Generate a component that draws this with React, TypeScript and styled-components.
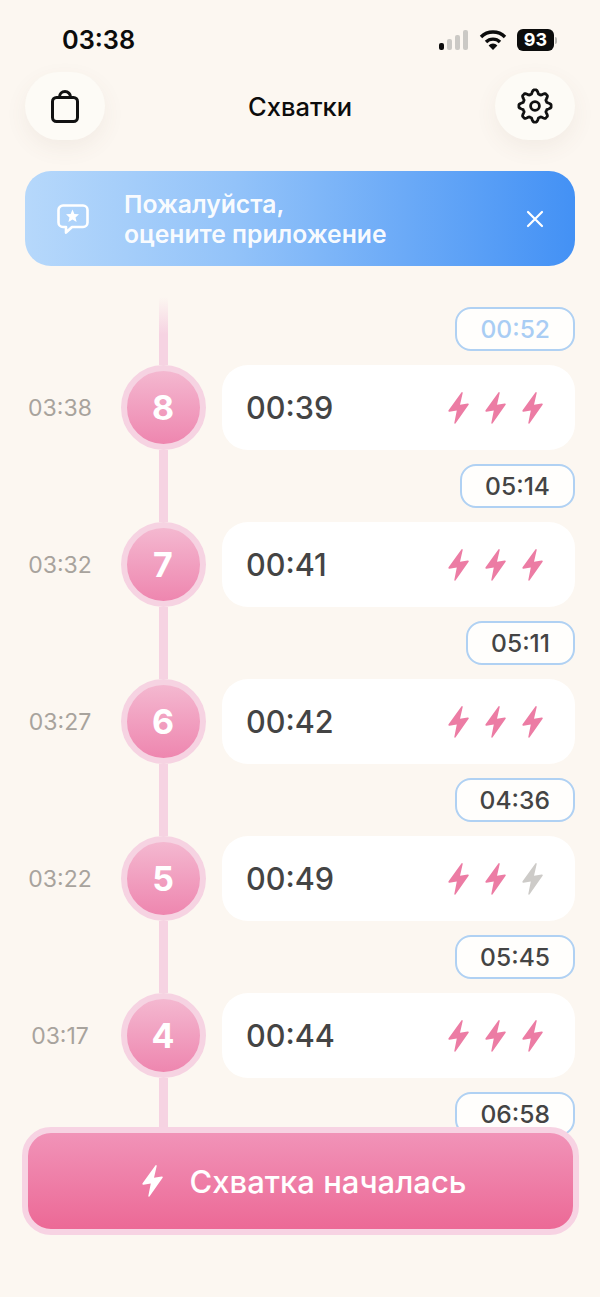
import React from "react";
import styled, { createGlobalStyle } from "styled-components";

const GlobalStyle = createGlobalStyle`
  html, body {
    margin: 0;
    padding: 0;
    background: #fcf7f1;
    font-family: Inter, "Noto Sans", sans-serif;
  }
`;

const Page = styled.div`
  position: relative;
  width: 600px;
  height: 1297px;
  overflow: hidden;
  display: flex;
  flex-direction: column;
  background: #fcf7f1;
`;

const StatusBar = styled.div`
  height: 72px;
  flex: none;
  display: flex;
  align-items: flex-start;
  justify-content: space-between;
  padding: 0 43px 0 62px;
  box-sizing: border-box;
`;

const Clock = styled.div`
  font-size: 25.3px;
  font-weight: 600;
  line-height: 34px;
  margin-top: 23px;
  color: #0c0c0c;
`;

const StatusIcons = styled.div`
  display: flex;
  align-items: center;
  margin-top: 28px;
  height: 24px;
`;

const Signal = styled.div`
  display: flex;
  align-items: flex-end;
  gap: 2.5px;
  height: 20px;
  margin-right: 11px;
`;

const SignalBar = styled.span<{ $h: number; $on?: boolean }>`
  width: 5.5px;
  height: ${(p) => p.$h}px;
  border-radius: 2px;
  background: ${(p) => (p.$on ? "#0c0c0c" : "#cbc9c5")};
`;

const Battery = styled.div`
  display: flex;
  align-items: center;
  margin-left: 10px;
`;

const BatteryBody = styled.div`
  width: 37px;
  height: 22px;
  border-radius: 6px;
  background: #0c0c0c;
  color: #fff;
  font-size: 18px;
  font-weight: 700;
  line-height: 22px;
  text-align: center;
`;

const BatteryTip = styled.span`
  width: 2px;
  height: 7px;
  margin-left: 1px;
  border-radius: 0 2px 2px 0;
  background: #b9b7b3;
`;

const Header = styled.div`
  flex: none;
  height: 68px;
  padding: 0 25px;
  display: flex;
  align-items: center;
  justify-content: space-between;
`;

const RoundButton = styled.button`
  width: 80px;
  height: 68px;
  padding: 0;
  border: 0;
  border-radius: 34px;
  background: #fdfbf6;
  box-shadow: 0 8px 22px rgba(110, 90, 70, 0.07);
  display: flex;
  align-items: center;
  justify-content: center;
  color: #111;
`;

const Title = styled.div`
  font-size: 25.5px;
  font-weight: 500;
  color: #0c0c0c;
`;

const Banner = styled.div`
  flex: none;
  height: 95px;
  margin: 31px 25px 0;
  border-radius: 26px;
  background: linear-gradient(90deg, #b6d8fb 0%, #93c3f9 38%, #4391f5 100%);
  display: flex;
  align-items: center;
  padding: 0 31px 0 32px;
  color: #fff;
`;

const BannerText = styled.div`
  flex: 1;
  margin-left: 35px;
  font-size: 24.7px;
  font-weight: 600;
  line-height: 30px;
  color: rgba(255, 255, 255, 0.96);
`;

const List = styled.div`
  flex: 1;
  min-height: 0;
  overflow: hidden;
  margin-top: 31px;
  padding: 0 25px;
`;

const Columns = styled.div<{ $h: number }>`
  display: grid;
  grid-template-columns: 95px 86px 1fr;
  height: ${(p) => p.$h}px;
`;

const Rail = styled.div<{ $fade?: boolean }>`
  grid-column: 2;
  justify-self: center;
  width: 9px;
  background: ${(p) =>
    p.$fade
      ? "linear-gradient(180deg, rgba(246,211,226,0) 0%, #f6d3e2 55%)"
      : "#f6d3e2"};
`;

const Pill = styled.div<{ $fresh?: boolean }>`
  grid-column: 3;
  justify-self: end;
  align-self: end;
  margin-bottom: 14px;
  height: 44px;
  box-sizing: border-box;
  padding: 0 23px;
  border: 2px solid #b0d1f3;
  border-radius: 16px;
  background: #fffefc;
  color: ${(p) => (p.$fresh ? "#a9cdf4" : "#444444")};
  font-size: 24.6px;
  font-weight: 500;
  line-height: 41px;
`;

const Time = styled.div`
  width: 70px;
  align-self: center;
  text-align: center;
  font-size: 23px;
  color: #a8a39d;
`;

const Marker = styled.div`
  justify-self: center;
  width: 85px;
  height: 85px;
  box-sizing: border-box;
  border: 6px solid #f6d3e2;
  border-radius: 50%;
  background: linear-gradient(180deg, #f4b8d0 0%, #ee86af 100%);
  color: #fff;
  font-size: 34px;
  font-weight: 700;
  line-height: 73px;
  text-align: center;
`;

const Card = styled.div`
  margin-left: 16px;
  border-radius: 26px;
  background: #fff;
  display: flex;
  align-items: center;
  justify-content: space-between;
  padding: 0 32px 0 24px;
`;

const Duration = styled.div`
  font-size: 30.6px;
  font-weight: 500;
  color: #444444;
`;

const Bolts = styled.div`
  display: flex;
  gap: 16px;
`;

const FooterButton = styled.button`
  position: absolute;
  left: 22px;
  top: 1127px;
  width: 557px;
  height: 108px;
  box-sizing: border-box;
  border: 6.5px solid #f7d3e3;
  border-radius: 29px;
  background: linear-gradient(180deg, #f193b8 0%, #ec6996 100%);
  color: #fff;
  font-family: inherit;
  font-size: 31px;
  font-weight: 500;
  display: flex;
  align-items: center;
  justify-content: center;
  gap: 27px;
  padding: 0 0 0 7px;
`;

const Bolt = ({ color }: { color: string }) => (
  <svg width={21} height={34} viewBox="0 0 22 34" fill={color}>
    <path d="M14.2 0.6 L0.6 19.4 Q-0.2 20.9 1.6 20.8 L9.2 19.6 L6.6 32.8 Q6.8 34.2 8 33 L21.6 13.6 Q22.3 12.2 20.6 12.3 L12.6 13.6 L15.4 1.2 Q15.2 -0.4 14.2 0.6 Z" />
  </svg>
);

const BagIcon = () => (
  <svg width="28" height="33" viewBox="0 0 28 33" fill="none" stroke="#111" strokeWidth="3" strokeLinejoin="round">
    <rect x="1.5" y="7.5" width="25" height="24" rx="4" />
    <path d="M8.5 7.5 V7 A5.5 5.5 0 0 1 19.5 7 V7.5" />
  </svg>
);

// eight rounded teeth, sampled around the circle
const gearPath = Array.from({ length: 144 }, (_, i) => {
  const a = (i / 144) * Math.PI * 2;
  const wave = Math.max(-1, Math.min(1, 1.5 * Math.cos(8 * a)));
  const r = 14.2 + 1.9 * wave;
  const x = 18 + r * Math.sin(a);
  const y = 18 - r * Math.cos(a);
  return `${i === 0 ? "M" : "L"}${x.toFixed(2)} ${y.toFixed(2)}`;
}).join(" ") + " Z";

const GearIcon = () => (
  <svg width="36" height="36" viewBox="0 0 36 36" fill="none" stroke="#111" strokeWidth="2.8" strokeLinejoin="round">
    <path d={gearPath} />
    <circle cx="18" cy="18" r="4.4" />
  </svg>
);

const WifiIcon = () => (
  <svg width="28" height="22" viewBox="0 0 28 22" fill="none" stroke="#0c0c0c" strokeWidth="3.4">
    <path d="M2 8 A17 17 0 0 1 26 8" />
    <path d="M7 13 A10 10 0 0 1 21 13" />
    <path d="M14 21 L9.6 16.4 A6.2 6.2 0 0 1 18.4 16.4 Z" fill="#0c0c0c" stroke="none" />
  </svg>
);

const ChatStarIcon = () => (
  <svg width="32" height="30" viewBox="0 0 32 30" fill="none">
    <path
      d="M6 1.5 H26 A4.5 4.5 0 0 1 30.5 6 V18.5 A4.5 4.5 0 0 1 26 23 H15 L9 28.5 V23 H6 A4.5 4.5 0 0 1 1.5 18.5 V6 A4.5 4.5 0 0 1 6 1.5 Z"
      stroke="#fff"
      strokeWidth="2.6"
      strokeLinejoin="round"
    />
    <path
      d="M15.5 5.5 L17.4 9.9 L22 10.3 L18.5 13.4 L19.6 18 L15.5 15.6 L11.4 18 L12.5 13.4 L9 10.3 L13.6 9.9 Z"
      fill="#fff"
    />
  </svg>
);

const CloseIcon = () => (
  <svg width="18" height="18" viewBox="0 0 18 18" fill="none" stroke="#fff" strokeWidth="2.2" strokeLinecap="round">
    <path d="M2 2 L16 16 M16 2 L2 16" />
  </svg>
);

const contractions = [
  { n: 8, time: "03:38", duration: "00:39", level: 3, next: "05:14" },
  { n: 7, time: "03:32", duration: "00:41", level: 3, next: "05:11" },
  { n: 6, time: "03:27", duration: "00:42", level: 3, next: "04:36" },
  { n: 5, time: "03:22", duration: "00:49", level: 2, next: "05:45" },
  { n: 4, time: "03:17", duration: "00:44", level: 3, next: "06:58" },
];

export default function App() {
  return (
    <Page>
      <GlobalStyle />
      <StatusBar>
        <Clock>03:38</Clock>
        <StatusIcons>
          <Signal>
            <SignalBar $h={7} $on />
            <SignalBar $h={11} />
            <SignalBar $h={15} />
            <SignalBar $h={20} />
          </Signal>
          <WifiIcon />
          <Battery>
            <BatteryBody>93</BatteryBody>
            <BatteryTip />
          </Battery>
        </StatusIcons>
      </StatusBar>

      <Header>
        <RoundButton>
          <BagIcon />
        </RoundButton>
        <Title>Схватки</Title>
        <RoundButton>
          <GearIcon />
        </RoundButton>
      </Header>

      <Banner>
        <ChatStarIcon />
        <BannerText>
          Пожалуйста,
          <br />
          оцените приложение
        </BannerText>
        <CloseIcon />
      </Banner>

      <List>
        <Columns $h={68}>
          <Rail $fade />
          <Pill $fresh>00:52</Pill>
        </Columns>
        {contractions.map((c) => (
          <React.Fragment key={c.n}>
            <Columns $h={85}>
              <Time>{c.time}</Time>
              <Marker>{c.n}</Marker>
              <Card>
                <Duration>{c.duration}</Duration>
                <Bolts>
                  {[1, 2, 3].map((i) => (
                    <Bolt key={i} color={i <= c.level ? "#ec7ca4" : "#cdcbc8"} />
                  ))}
                </Bolts>
              </Card>
            </Columns>
            <Columns $h={72}>
              <Rail />
              <Pill>{c.next}</Pill>
            </Columns>
          </React.Fragment>
        ))}
      </List>

      <FooterButton>
        <Bolt color="#fff" />
        Схватка началась
      </FooterButton>
    </Page>
  );
}
